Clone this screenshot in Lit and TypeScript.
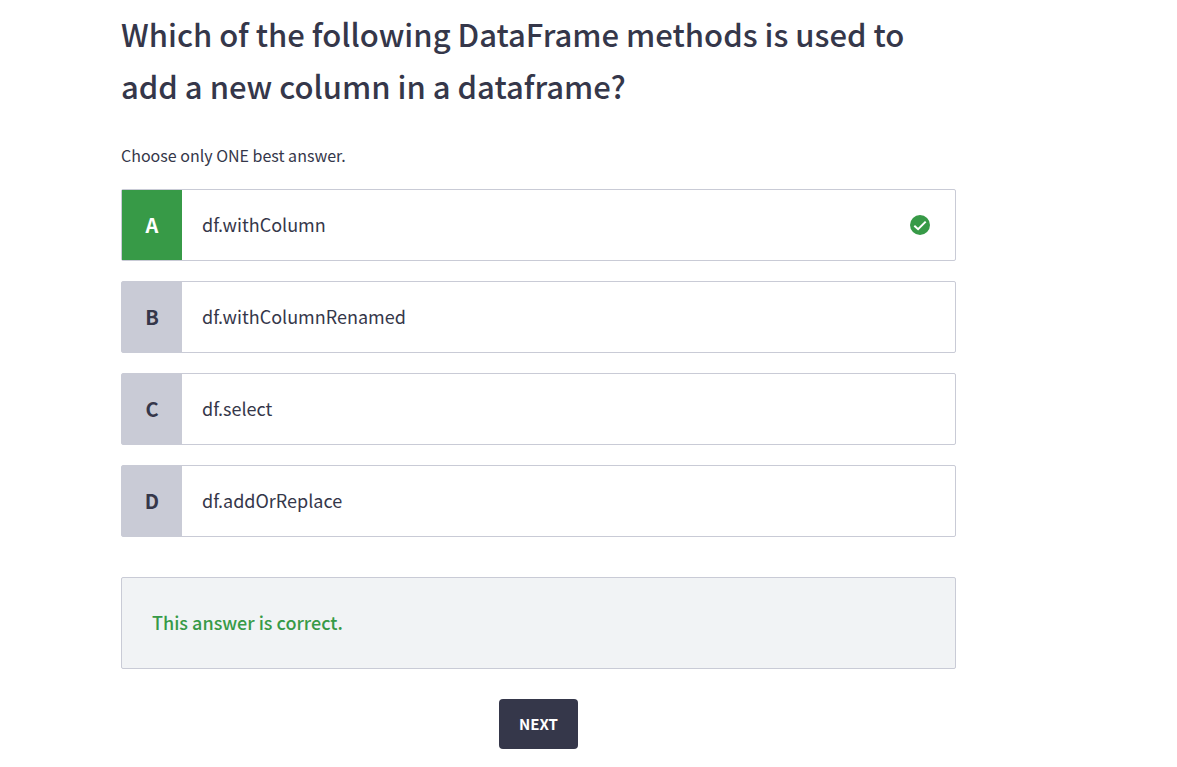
import { LitElement, html, css, nothing } from "lit";
import { customElement } from "lit/decorators.js";

interface Answer {
  letter: string;
  text: string;
  correct?: boolean;
}

const ANSWERS: Answer[] = [
  { letter: "A", text: "df.withColumn", correct: true },
  { letter: "B", text: "df.withColumnRenamed" },
  { letter: "C", text: "df.select" },
  { letter: "D", text: "df.addOrReplace" },
];

const checkIcon = html`<svg class="check" viewBox="0 0 20 20" aria-hidden="true">
  <circle cx="10" cy="10" r="10" fill="#379a47" />
  <path d="M4.3 10.7 8.1 14.2 15.7 6.6" fill="none" stroke="#fff" stroke-width="2" />
</svg>`;

@customElement("app-root")
export class AppRoot extends LitElement {
  static styles = css`
    :host {
      display: block;
      font-family: "Source Sans Pro", "Noto Sans CJK SC", sans-serif;
      color: #35374a;
      background: #fff;
    }
    * {
      box-sizing: border-box;
    }
    .quiz {
      max-width: 956px;
      padding: 8px 0 18px 121px;
    }
    .question {
      margin: 0 0 31px;
      font-size: 31px;
      line-height: 52px;
      font-weight: 500;
    }
    .hint {
      margin: 0 0 22px;
      font-size: 16px;
      line-height: 24px;
    }
    .answers {
      display: grid;
      gap: 20px;
      margin: 0;
      padding: 0;
      list-style: none;
    }
    .answer {
      display: flex;
      align-items: stretch;
      width: 100%;
      height: 72px;
      padding: 0;
      border: 1px solid #c9cbd6;
      border-radius: 2px;
      background: #fff;
      color: inherit;
      font: inherit;
      font-size: 18px;
      line-height: 24px;
      text-align: left;
      cursor: pointer;
    }
    .letter {
      display: grid;
      place-items: center;
      width: 60px;
      background: #c9cbd6;
      font-size: 20px;
      font-weight: 700;
    }
    .correct .letter {
      background: #379a47;
      color: #fff;
    }
    .text {
      flex: 1;
      padding: 22px 20px 24px;
    }
    .check {
      align-self: center;
      width: 20px;
      height: 20px;
      margin-right: 25px;
    }
    .result {
      margin: 40px 0 30px;
      padding: 32px 30px 34px;
      border: 1px solid #c9cbd6;
      border-radius: 2px;
      background: #f1f3f5;
      color: #379a47;
      font-size: 18px;
      line-height: 24px;
      font-weight: 500;
    }
    .actions {
      display: flex;
      justify-content: center;
    }
    .next {
      padding: 13px 20px;
      border: 0;
      border-radius: 4px;
      background: #35374a;
      color: #fff;
      font: inherit;
      font-size: 15px;
      line-height: 24px;
      font-weight: 700;
      cursor: pointer;
    }
  `;

  render() {
    return html`
      <main class="quiz">
        <h1 class="question">
          Which of the following DataFrame methods is used to add a new column in a dataframe?
        </h1>
        <p class="hint">Choose only ONE best answer.</p>
        <ul class="answers">
          ${ANSWERS.map(
            (a) => html`<li>
              <button type="button" class="answer ${a.correct ? "correct" : ""}">
                <span class="letter">${a.letter}</span>
                <span class="text">${a.text}</span>
                ${a.correct ? checkIcon : nothing}
              </button>
            </li>`,
          )}
        </ul>
        <p class="result" role="status">This answer is correct.</p>
        <div class="actions"><button type="button" class="next">NEXT</button></div>
      </main>
    `;
  }
}
